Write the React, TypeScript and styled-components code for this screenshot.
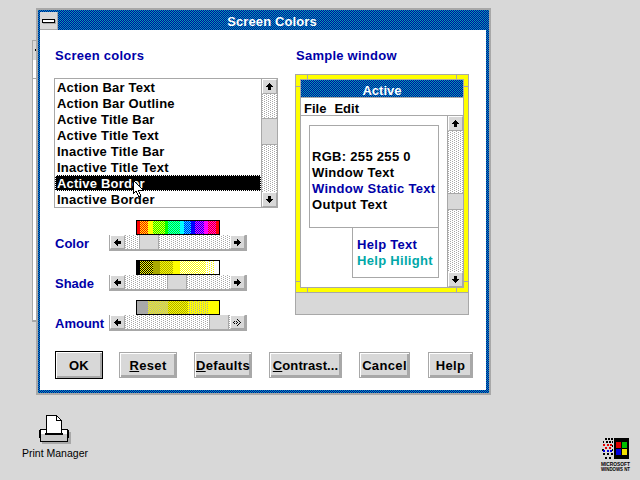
import React from "react";
import styled, { createGlobalStyle } from "styled-components";

const Global = createGlobalStyle`
  html, body { margin: 0; padding: 0; background: #d8d8d8; }
  * { box-sizing: border-box; }
  body { font-family: "Liberation Sans", Arial, sans-serif; }
`;

const tile = (w: number, h: number, base: string, fg: string, cells: [number, number][]) => {
  const rects = cells.map(([x, y]) => `<rect x='${x}' y='${y}' width='1' height='1' fill='${fg}'/>`).join("");
  const svg = `<svg xmlns='http://www.w3.org/2000/svg' width='${w}' height='${h}' shape-rendering='crispEdges'><rect width='${w}' height='${h}' fill='${base}'/>${rects}</svg>`;
  return `url("data:image/svg+xml,${encodeURIComponent(svg)}")`;
};
const checker = (a: string, b: string) => `${tile(2, 2, a, b, [[1, 0], [0, 1]])} 0 0 / 2px 2px`;
const dotted = (a: string, b: string) => `${tile(4, 2, a, b, [[0, 0], [2, 1]])} 0 0 / 4px 2px`;

const Desktop = styled.div`
  position: relative;
  width: 640px;
  height: 480px;
  overflow: hidden;
  background: #d8d8d8;
`;

const BackWindow = styled.div`
  position: absolute;
  left: 32px;
  top: 40px;
  width: 20px;
  height: 282px;
  background: #fff;
  border: 1px solid #a8a8a8;
  border-width: 1px 0 2px 1px;
`;

const BackTitle = styled.div`
  height: 19px;
  background: #d8d8d8;
  padding: 8px 0 0 2px;
`;

const BackDot = styled.div`
  width: 2px;
  height: 2px;
  background: #000;
`;

const BackRule = styled.div`
  height: 1px;
  margin-top: 18px;
  background: #a8a8a8;
`;

const Dialog = styled.div`
  position: absolute;
  left: 36px;
  top: 8px;
  width: 455px;
  height: 387px;
  border: 2px solid #a8a8a8;
  padding: 0 3px 3px 2px;
  background: ${checker("#00a8a8", "#0000a8")};
  background-clip: padding-box;
  display: flex;
  flex-direction: column;
`;

const TitleBar = styled.div`
  height: 20px;
  display: flex;
  flex: none;
`;

const SysMenu = styled.div`
  width: 18px;
  height: 18px;
  margin-top: 2px;
  flex: none;
  background: #d8d8d8;
  border-right: 1px solid #a8a8a8;
  border-bottom: 1px solid #a8a8a8;
  display: flex;
  align-items: center;
  justify-content: center;
`;

const SysDash = styled.div`
  width: 13px;
  height: 4px;
  background: #fff;
  border: 1px solid #000;
  box-shadow: 1px 1px 0 #a8a8a8;
`;

const TitleText = styled.div`
  flex: 1;
  text-align: center;
  color: #fff;
  font-weight: 700;
  font-size: 13px;
  letter-spacing: 0.1px;
  line-height: 24px;
`;

const Body = styled.div`
  flex: 1;
  min-height: 0;
  background: #fff;
  display: flex;
  flex-direction: column;
  padding: 18px 0 0 14px;
`;

const Columns = styled.div`
  display: flex;
  gap: 17px;
`;

const LeftCol = styled.div`
  width: 224px;
  display: flex;
  flex-direction: column;
`;

const RightCol = styled.div`
  width: 174px;
  display: flex;
  flex-direction: column;
`;

const Heading = styled.div<{ $gap: number }>`
  color: #0000a8;
  font-weight: 700;
  font-size: 13px;
  letter-spacing: 0.25px;
  line-height: 16px;
  height: 16px;
  padding-left: 1px;
  margin-bottom: ${(p) => p.$gap}px;
`;

const ListFrame = styled.div`
  width: 224px;
  height: 130px;
  flex: none;
  border: 1px solid #a8a8a8;
  display: flex;
  background: #fff;
  margin-bottom: 12px;
`;

const ListItems = styled.div`
  flex: 1;
  display: flex;
  flex-direction: column;
`;

const ListItem = styled.div<{ $selected?: boolean }>`
  height: 16px;
  flex: none;
  padding-left: 2px;
  font-size: 13px;
  font-weight: 700;
  letter-spacing: 0.2px;
  line-height: 18px;
  white-space: nowrap;
  color: ${(p) => (p.$selected ? "#fff" : "#000")};
  background: ${(p) => (p.$selected ? "#000" : "transparent")};
  ${(p) => (p.$selected ? "outline: 1px dotted #fff; outline-offset: -1px;" : "")}
`;

const VScroll = styled.div`
  width: 16px;
  flex: none;
  border-left: 1px solid #a8a8a8;
  display: flex;
  flex-direction: column;
`;

const Track = styled.div<{ $size?: number }>`
  flex: ${(p) => (p.$size ? `0 0 ${p.$size}px` : "1")};
  background: ${dotted("#ffffff", "#a8a8a8")};
`;

const VThumb = styled.div<{ $size: number }>`
  flex: none;
  height: ${(p) => p.$size}px;
  background: #d8d8d8;
  border-top: 1px solid #a8a8a8;
  border-bottom: 1px solid #a8a8a8;
`;

const HThumb = styled.div`
  flex: none;
  width: 20px;
  background: #d8d8d8;
  border-left: 1px solid #a8a8a8;
  border-right: 1px solid #a8a8a8;
`;

const ArrowBtn = styled.div`
  width: 15px;
  height: 15px;
  flex: none;
  background: #d8d8d8;
  border: 1px solid;
  border-color: #fff #a8a8a8 #a8a8a8 #fff;
  display: flex;
  align-items: center;
  justify-content: center;
`;

const HArrowBtn = styled(ArrowBtn)`
  height: 14px;
`;

type Dir = "up" | "down" | "left" | "right";
const rot: Record<Dir, number> = { up: 0, right: 90, down: 180, left: 270 };

const ArrowSvg = styled.svg<{ $dir: Dir }>`
  display: block;
  transform: rotate(${(p) => rot[p.$dir]}deg);
`;

const Arrow: React.FC<{ dir: Dir; faint?: boolean }> = ({ dir, faint }) => (
  <ArrowSvg $dir={dir} width="9" height="9" viewBox="0 0 9 9" shapeRendering="crispEdges">
    {faint ? (
      <path d="M4 1h1v1H4zM3 2h1v1H3zM5 2h1v1H5zM2 3h1v1H2zM6 3h1v1H6zM1 4h1v1H1zM7 4h1v1H7zM3 5h1v1H3zM5 5h1v1H5zM3 7h1v1H3zM5 7h1v1H5zM4 8h1v1H4zM4 4h1v1H4z" fill="#000" />
    ) : (
      <path d="M4 1h1v1h1v1h1v1h1v1H6v3H3V5H1V4h1V3h1V2h1z" fill="#000" />
    )}
  </ArrowSvg>
);

const Sliders = styled.div`
  display: flex;
  flex-direction: column;
  gap: 9px;
`;

const SliderRow = styled.div`
  display: flex;
  align-items: flex-end;
  height: 31px;
`;

const SliderLabel = styled.div`
  width: 55px;
  height: 16px;
  flex: none;
  color: #0000a8;
  font-weight: 700;
  font-size: 13px;
  line-height: 18px;
  padding-left: 1px;
  white-space: nowrap;
`;

const SliderCol = styled.div`
  width: 138px;
  display: flex;
  flex-direction: column;
  align-items: center;
`;

const Swatch = styled.div`
  width: 84px;
  height: 15px;
  border: 1px solid #000;
  display: flex;
`;

const Cell = styled.div<{ $w: number; $x: number; $a: string; $b?: string; $dots?: boolean }>`
  width: ${(p) => p.$w}px;
  flex: none;
  background: ${(p) => (p.$b ? (p.$dots ? dotted(p.$a, p.$b) : checker(p.$a, p.$b)) : p.$a)};
  background-position: ${(p) => -p.$x}px 0;
`;

const HScroll = styled.div`
  width: 138px;
  height: 16px;
  background: #a8a8a8;
  padding: 0 2px 2px 1px;
  display: flex;
  align-self: stretch;
`;

const SampleFrame = styled.div`
  position: relative;
  width: 174px;
  height: 241px;
  border: 1px solid #a8a8a8;
  background: #d8d8d8;
  display: flex;
  flex-direction: column;
`;

const YellowBorder = styled.div`
  height: 218px;
  flex: none;
  background: #ffff00;
  border-bottom: 1px solid #a8a8a8;
  padding: 4px;
  display: flex;
`;

const CornerTick = styled.div<{ $x: "l" | "r"; $y: "t" | "b" }>`
  position: absolute;
  background: #a8a8a8;
  ${(p) => (p.$x === "l" ? "left: 11px;" : "right: 11px;")}
  ${(p) => (p.$y === "t" ? "top: 0;" : "top: 213px;")}
  width: 1px;
  height: 4px;
`;

const CornerTickH = styled.div<{ $x: "l" | "r"; $y: "t" | "b" }>`
  position: absolute;
  background: #a8a8a8;
  ${(p) => (p.$x === "l" ? "left: 0;" : "right: 0;")}
  ${(p) => (p.$y === "t" ? "top: 11px;" : "top: 206px;")}
  width: 4px;
  height: 1px;
`;

const SampleInner = styled.div`
  flex: 1;
  min-width: 0;
  background: #fff;
  border: 1px solid #a8a8a8;
  display: flex;
  flex-direction: column;
`;

const SampleTitle = styled.div`
  height: 18px;
  flex: none;
  background: ${checker("#0000a8", "#00a8a8")};
  border-bottom: 1px solid #a8a8a8;
  color: #fff;
  text-align: center;
  font-size: 13px;
  font-weight: 700;
  line-height: 21px;
`;

const MenuBar = styled.div`
  height: 18px;
  flex: none;
  border-bottom: 1px solid #a8a8a8;
  display: flex;
  gap: 8px;
  padding-left: 3px;
  font-size: 13px;
  font-weight: 700;
  line-height: 21px;
`;

const ClientArea = styled.div`
  flex: 1;
  display: flex;
  min-height: 0;
`;

const ClientLeft = styled.div`
  flex: 1;
  min-width: 0;
  padding: 9px 8px 0 0;
  display: flex;
  flex-direction: column;
  align-items: flex-end;
`;

const TextBox = styled.div`
  width: 130px;
  height: 103px;
  flex: none;
  border: 1px solid #a8a8a8;
  padding: 22px 0 0 2px;
`;

const HelpBox = styled.div`
  width: 87px;
  height: 50px;
  flex: none;
  border: 1px solid #a8a8a8;
  border-top: 0;
  padding: 8px 0 0 4px;
`;

const Line = styled.div<{ $color?: string }>`
  height: 16px;
  font-size: 13px;
  font-weight: 700;
  letter-spacing: 0.3px;
  line-height: 18px;
  white-space: nowrap;
  color: ${(p) => p.$color ?? "#000"};
`;

const ButtonRow = styled.div`
  display: flex;
  align-items: center;
  margin-top: 20px;
  padding-left: 1px;
`;

const Btn = styled.div<{ $w: number; $ml: number; $def?: boolean; $track?: number }>`
  width: ${(p) => p.$w}px;
  height: ${(p) => (p.$def ? 28 : 26)}px;
  margin-left: ${(p) => p.$ml}px;
  flex: none;
  background: #d8d8d8;
  border: 1px solid ${(p) => (p.$def ? "#000" : "#a8a8a8")};
  box-shadow: inset 1px 1px 0 #fff, inset -2px -2px 0 #a8a8a8;
  text-align: center;
  font-size: 13px;
  font-weight: 700;
  letter-spacing: ${(p) => p.$track ?? 0.35}px;
  line-height: ${(p) => (p.$def ? 27 : 25)}px;
  white-space: nowrap;
  overflow: hidden;
`;

const Mnemonic = styled.span`
  text-decoration: underline;
`;

const IconBlock = styled.div`
  position: absolute;
  left: 0;
  top: 412px;
  width: 110px;
  display: flex;
  flex-direction: column;
  align-items: center;
`;

const IconLabel = styled.div`
  font-size: 10.5px;
  line-height: 14px;
  margin-top: 2px;
  color: #000;
  white-space: nowrap;
`;

const Logo = styled.svg`
  position: absolute;
  left: 598px;
  top: 436px;
`;

const Cursor = styled.svg`
  position: absolute;
  left: 132px;
  top: 179px;
`;

type CellDef = [number, string, string?, boolean?];
const R = "#ff0000", Y = "#ffff00", G = "#00ff00", C = "#00ffff", B = "#0000ff", M = "#ff00ff";
const O = "#a8a800", K = "#000000", W = "#ffffff", S = "#a8a8a8";

const rainbow: CellDef[] = [[3, R], [8, R, Y], [5, Y], [12, Y, G], [3, G], [12, G, C], [4, C], [7, C, B], [4, B], [9, B, M], [4, M], [8, M, R], [3, R]];
const shade: CellDef[] = [[3, K], [13, K, Y], [7, O], [13, O, Y], [7, Y], [17, Y, W], [9, W, Y], [9, W, Y, true], [4, W]];
const amount: CellDef[] = [[11, S], [20, S, Y], [20, O, Y], [20, Y, S, true], [11, Y]];

const offsets = (cells: CellDef[]) => {
  let x = 0;
  return cells.map(([w]) => {
    const at = x;
    x += w;
    return at;
  });
};

const items = [
  "Action Bar Text",
  "Action Bar Outline",
  "Active Title Bar",
  "Active Title Text",
  "Inactive Title Bar",
  "Inactive Title Text",
  "Active Border",
  "Inactive Border",
];

const sliders = [
  { label: "Color", cells: rainbow, before: 14, faint: false },
  { label: "Shade", cells: shade, before: 42, faint: false },
  { label: "Amount", cells: amount, before: 84, faint: true },
];

const Slider: React.FC<{ label: string; cells: CellDef[]; before: number; faint: boolean }> = ({ label, cells, before, faint }) => {
  const at = offsets(cells);
  return (
    <SliderRow>
      <SliderLabel>{label}</SliderLabel>
      <SliderCol>
        <Swatch>
          {cells.map(([w, a, b, dots], i) => (
            <Cell key={i} $w={w} $x={at[i]} $a={a} $b={b} $dots={dots} />
          ))}
        </Swatch>
        <HScroll>
          <HArrowBtn><Arrow dir="left" /></HArrowBtn>
          <Track $size={before} />
          <HThumb />
          <Track />
          <HArrowBtn><Arrow dir="right" faint={faint} /></HArrowBtn>
        </HScroll>
      </SliderCol>
    </SliderRow>
  );
};

export default function App() {
  return (
    <Desktop>
      <Global />
      <BackWindow>
        <BackTitle><BackDot /></BackTitle>
        <BackRule />
      </BackWindow>
      <Dialog>
        <TitleBar>
          <SysMenu><SysDash /></SysMenu>
          <TitleText>Screen Colors</TitleText>
        </TitleBar>
        <Body>
          <Columns>
            <LeftCol>
              <Heading $gap={14}>Screen colors</Heading>
              <ListFrame>
                <ListItems>
                  {items.map((t) => (
                    <ListItem key={t} $selected={t === "Active Border"}>{t}</ListItem>
                  ))}
                </ListItems>
                <VScroll>
                  <ArrowBtn><Arrow dir="up" /></ArrowBtn>
                  <Track $size={24} />
                  <VThumb $size={27} />
                  <Track />
                  <ArrowBtn><Arrow dir="down" /></ArrowBtn>
                </VScroll>
              </ListFrame>
              <Sliders>
                {sliders.map((s) => (
                  <Slider key={s.label} {...s} />
                ))}
              </Sliders>
            </LeftCol>
            <RightCol>
              <Heading $gap={10}>Sample window</Heading>
              <SampleFrame>
                <YellowBorder>
                  <SampleInner>
                    <SampleTitle>Active</SampleTitle>
                    <MenuBar><span>File</span><span>Edit</span></MenuBar>
                    <ClientArea>
                      <ClientLeft>
                        <TextBox>
                          <Line>RGB: 255 255 0</Line>
                          <Line>Window Text</Line>
                          <Line $color="#0000a8">Window Static Text</Line>
                          <Line>Output Text</Line>
                        </TextBox>
                        <HelpBox>
                          <Line $color="#0000a8">Help Text</Line>
                          <Line $color="#00a8a8">Help Hilight</Line>
                        </HelpBox>
                      </ClientLeft>
                      <VScroll>
                        <ArrowBtn><Arrow dir="up" /></ArrowBtn>
                        <Track $size={62} />
                        <VThumb $size={17} />
                        <Track />
                        <ArrowBtn><Arrow dir="down" /></ArrowBtn>
                      </VScroll>
                    </ClientArea>
                  </SampleInner>
                </YellowBorder>
                <CornerTick $x="l" $y="t" /><CornerTick $x="r" $y="t" />
                <CornerTick $x="l" $y="b" /><CornerTick $x="r" $y="b" />
                <CornerTickH $x="l" $y="t" /><CornerTickH $x="r" $y="t" />
                <CornerTickH $x="l" $y="b" /><CornerTickH $x="r" $y="b" />
              </SampleFrame>
            </RightCol>
          </Columns>
          <ButtonRow>
            <Btn $def $w={48} $ml={0}>OK</Btn>
            <Btn $w={58} $ml={16}><Mnemonic>R</Mnemonic>eset</Btn>
            <Btn $w={58} $ml={17}><Mnemonic>D</Mnemonic>efaults</Btn>
            <Btn $w={73} $ml={17} $track={0.1}><Mnemonic>C</Mnemonic>ontrast...</Btn>
            <Btn $w={51} $ml={17}>Cancel</Btn>
            <Btn $w={45} $ml={18}>Help</Btn>
          </ButtonRow>
        </Body>
      </Dialog>
      <Cursor width="13" height="19" viewBox="0 0 13 19">
        <path d="M1 1v14l3-3 3 6 2-1-3-6h5z" fill="#fff" stroke="#000" shapeRendering="crispEdges" />
      </Cursor>
      <IconBlock>
        <svg width="36" height="32" viewBox="0 0 36 32" shapeRendering="crispEdges">
          <rect x="5" y="20" width="29" height="12" fill="#a8a8a8" />
          <rect x="2" y="18" width="2" height="8" fill="#000" />
          <rect x="30" y="18" width="2" height="8" fill="#000" />
          <rect x="3.5" y="17.5" width="27" height="12" fill="#fff" stroke="#000" />
          <rect x="4" y="22" width="26" height="7" fill="#c8c8c8" />
          <path d="M9.5 3.5h10l5 5v13h-15z" fill="#fff" stroke="#000" />
          <path d="M19.5 3.5v5h5" fill="none" stroke="#000" />
          <rect x="8" y="21" width="18" height="2" fill="#000" />
        </svg>
        <IconLabel>Print Manager</IconLabel>
      </IconBlock>
      <Logo width="36" height="36" viewBox="0 0 36 36" shapeRendering="crispEdges">
        <rect x="16" y="2" width="15" height="21" fill="#000" />
        <rect x="18" y="6" width="5" height="6" fill="#e00000" />
        <rect x="24" y="6" width="5" height="6" fill="#00c000" />
        <rect x="18" y="13" width="5" height="6" fill="#0000e0" />
        <rect x="24" y="13" width="5" height="6" fill="#f0e000" />
        <path d="M7 2h2v2H7zM10 2h2v2h-2zM13 2h2v2h-2zM5 5h1v2H5zM8 5h2v2H8zM11 5h2v2h-2zM14 5h1v2h-1zM4 13h2v2H4zM14 9h1v2h-1zM14 13h1v2h-1zM5 17h2v2H5zM9 17h2v2H9zM13 17h2v2h-2zM7 21h2v2H7zM11 21h2v2h-2z" fill="#000" />
        <path d="M5 8h2v2H5zM9 8h2v2H9zM12 8h2v2h-2zM7 11h2v2H7zM11 11h2v2h-2z" fill="#e00000" />
        <path d="M5 14h2v2H5zM9 14h2v2H9zM12 14h2v2h-2z" fill="#0000e0" />
        <text x="3" y="30" fontFamily="Liberation Sans" fontSize="5" fontWeight="700" fill="#000" textLength="29" lengthAdjust="spacingAndGlyphs">MICROSOFT</text>
        <text x="3" y="35" fontFamily="Liberation Sans" fontSize="5" fontWeight="700" fill="#000" textLength="29" lengthAdjust="spacingAndGlyphs">WINDOWS NT</text>
      </Logo>
    </Desktop>
  );
}
